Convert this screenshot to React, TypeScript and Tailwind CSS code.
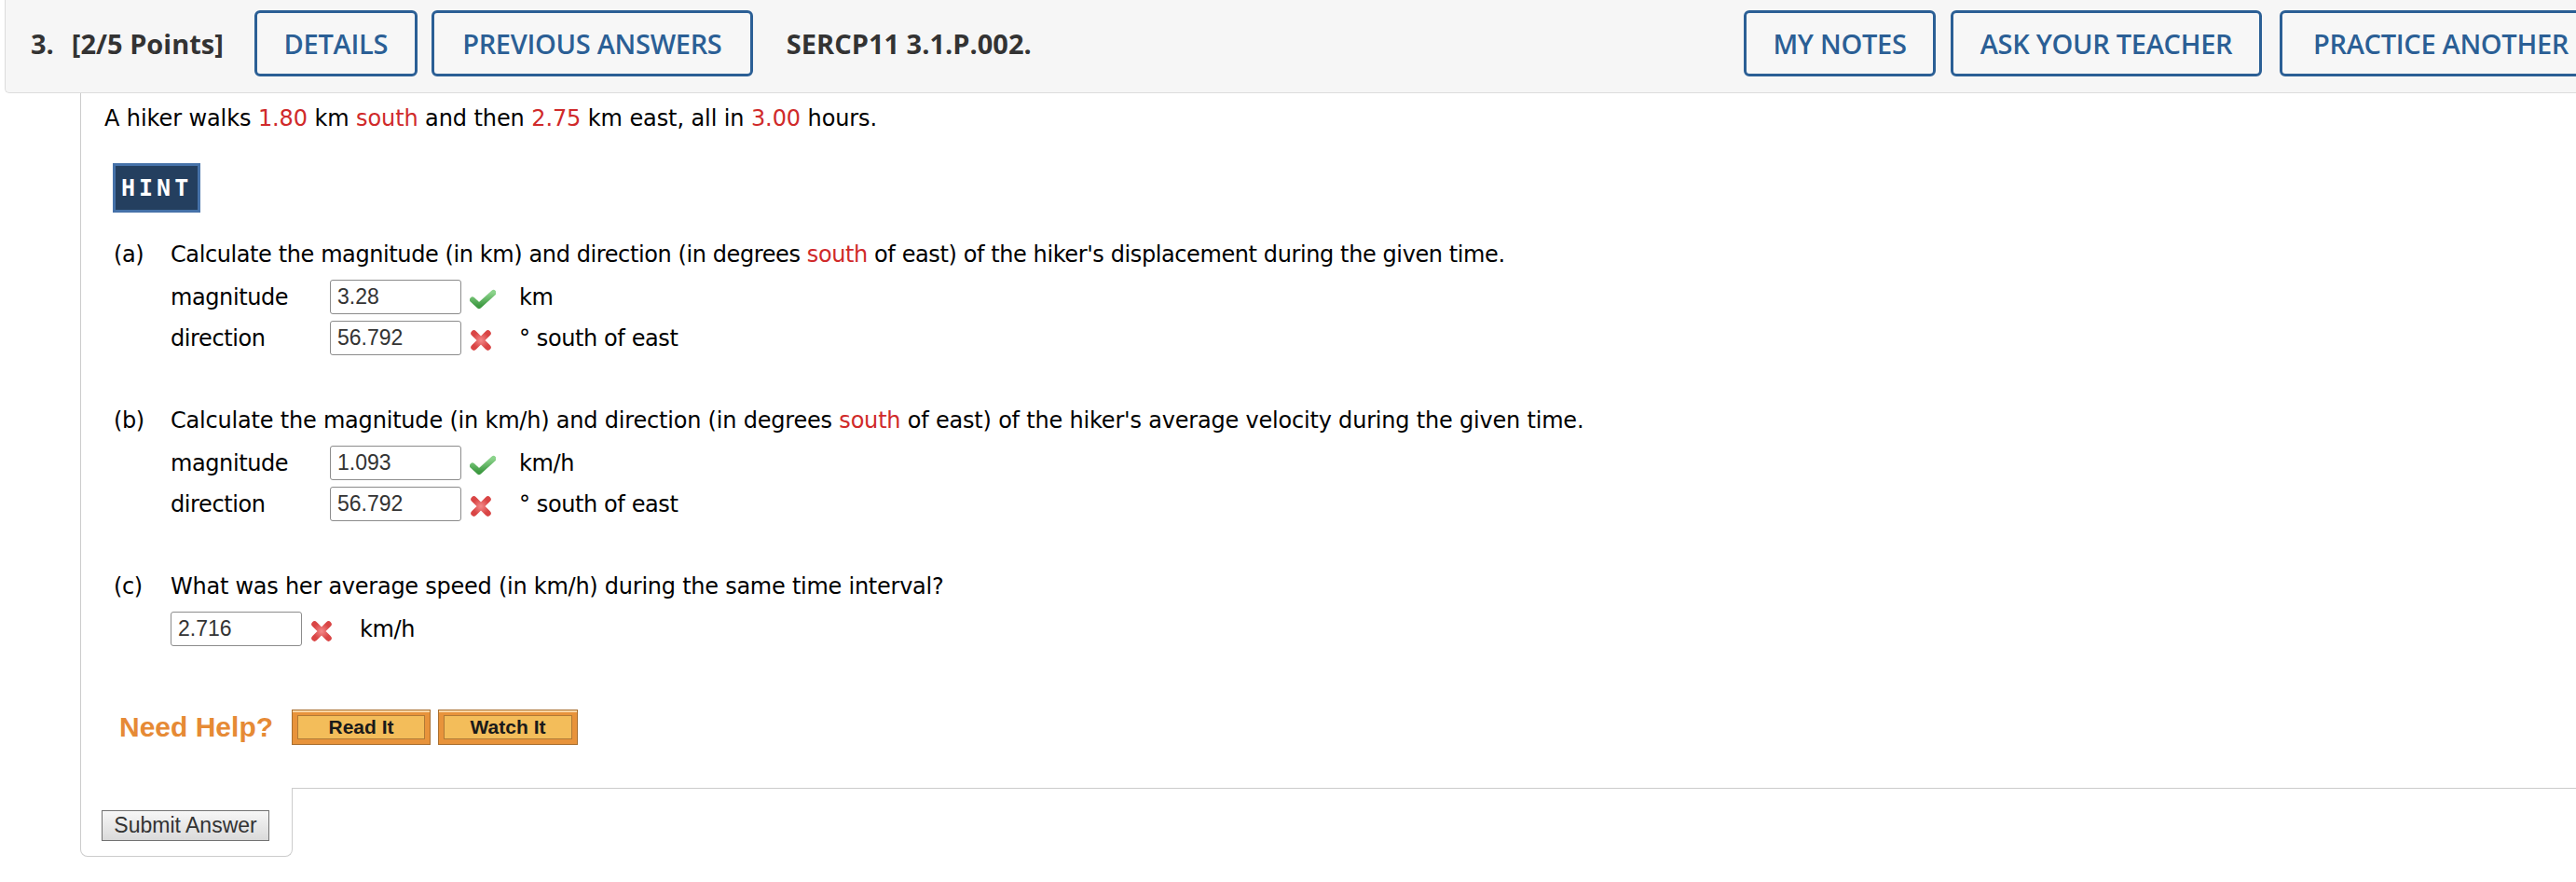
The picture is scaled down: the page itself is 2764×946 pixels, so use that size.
import React from 'react';

const BLUE = 'border-[#2b5f95] text-[#2b5f95]';

function HeaderButton({ label, className }: { label: string; className: string }) {
  return (
    <div
      className={`flex h-[71px] shrink-0 items-center justify-center rounded-[6px] border-[3px] bg-[#f7f7f7] text-[29px] font-semibold tracking-[-0.3px] ${BLUE} ${className}`}
    >
      {label}
    </div>
  );
}

function CheckIcon() {
  return (
    <svg width="28" height="22" viewBox="0 0 28 22">
      <defs>
        <linearGradient id="chk" x1="0" y1="0" x2="0" y2="1">
          <stop offset="0" stopColor="#8bd38b" />
          <stop offset="1" stopColor="#3e9a42" />
        </linearGradient>
      </defs>
      <path d="M3 11.5 L10 18 L25.5 4" fill="none" stroke="url(#chk)" strokeWidth="6" strokeLinecap="round" strokeLinejoin="round" />
    </svg>
  );
}

function CrossIcon() {
  return (
    <svg width="24" height="24" viewBox="0 0 24 24">
      <defs>
        <radialGradient id="crs" cx="0.5" cy="0.5" r="0.6">
          <stop offset="0" stopColor="#f48a8a" />
          <stop offset="1" stopColor="#d94545" />
        </radialGradient>
      </defs>
      <path d="M4.5 4.5 L19.5 19.5 M19.5 4.5 L4.5 19.5" fill="none" stroke="url(#crs)" strokeWidth="6.5" strokeLinecap="round" />
    </svg>
  );
}

function AnswerBox({ value }: { value: string }) {
  return (
    <input
      type="text"
      readOnly
      value={value}
      className="h-[37px] w-[141px] shrink-0 rounded-[3px] border border-[#8c8c8c] bg-white pl-[7px] font-['Liberation_Sans',Arial,sans-serif] text-[23px] tracking-normal text-[#333333] outline-none"
    />
  );
}

interface RowProps {
  label?: string;
  value: string;
  correct: boolean;
  unit: string;
  className?: string;
}

function AnswerRow({ label, value, correct, unit, className = '' }: RowProps) {
  return (
    <div className={`flex h-[37px] items-center ${className}`}>
      {label && <span className="w-[171px] shrink-0">{label}</span>}
      <AnswerBox value={value} />
      <span className="ml-[9px] mt-[5px] flex w-[28px] shrink-0">{correct ? <CheckIcon /> : <CrossIcon />}</span>
      <span className="ml-[25px] whitespace-nowrap">{unit}</span>
    </div>
  );
}

function Red({ children }: { children: React.ReactNode }) {
  return <span className="text-[#d02a2a]">{children}</span>;
}

interface QuestionProps {
  part: string;
  children: React.ReactNode;
  className?: string;
  textClass?: string;
}

function Question({ part, children, className = '', textClass = '' }: QuestionProps) {
  return (
    <div className={`ml-[10px] flex ${className}`}>
      <span className="w-[61px] shrink-0">({part})</span>
      <div className={`whitespace-nowrap ${textClass}`}>{children}</div>
    </div>
  );
}

function HelpButton({ label, className = '' }: { label: string; className?: string }) {
  return (
    <div
      className={`h-[38px] border border-[#a96f30] bg-[#e8933b] p-[5px] shadow-[inset_0_2px_0_#f8d6a4] ${className}`}
    >
      <div className="flex h-full items-center justify-center border border-[#b07a36] bg-[#f3bd5a] font-['Liberation_Sans',Arial,sans-serif] text-[21px] font-bold tracking-normal text-[#1a1a1a]">
        {label}
      </div>
    </div>
  );
}

export default function App() {
  return (
    <div className="min-h-[946px] w-full overflow-hidden bg-white font-['DejaVu_Sans',Verdana,sans-serif] text-[24px] leading-[36px] tracking-[-0.4px] text-black">
      {/* question header */}
      <div className="ml-[5px] flex h-[100px] items-center rounded-bl-[5px] border-b border-l border-[#dcdcdc] bg-[#f6f6f6] pb-[6px] pl-[27px] font-['Open_Sans',sans-serif] text-[29px] leading-none tracking-normal text-[#333333]">
        <span className="font-bold">3.</span>
        <span className="ml-[19px] font-bold">[2/5 Points]</span>
        <HeaderButton label="DETAILS" className="ml-[33px] w-[175px]" />
        <HeaderButton label="PREVIOUS ANSWERS" className="ml-[15px] w-[345px]" />
        <span className="ml-[36px] whitespace-nowrap font-bold">SERCP11 3.1.P.002.</span>
        <div className="-mr-[28px] ml-auto flex">
          <HeaderButton label="MY NOTES" className="w-[206px]" />
          <HeaderButton label="ASK YOUR TEACHER" className="ml-[16px] w-[334px]" />
          <HeaderButton label="PRACTICE ANOTHER" className="ml-[19px] w-[346px]" />
        </div>
      </div>

      {/* question body */}
      <div className="ml-[86px]">
        <div className="border-l border-[#cccccc] pb-[46px] pl-[25px] pt-[9px]">
          <p className="whitespace-nowrap tracking-[-0.1px]">
            A hiker walks <Red>1.80</Red> km <Red>south</Red> and then <Red>2.75</Red> km east, all in <Red>3.00</Red> hours.
          </p>

          <div className="ml-[9px] mt-[30px] flex h-[53px] w-[94px] items-center border-[3px] border-[#4672a9] bg-[#243f5f] pl-[6px] font-['DejaVu_Sans_Mono',monospace] text-[25px] font-bold tracking-[4px] text-white">
            HINT
          </div>

          <Question part="a" className="mt-[27px]">
            Calculate the magnitude (in km) and direction (in degrees <Red>south</Red> of east) of the hiker's displacement during the given time.
          </Question>
          <div className="ml-[71px] mt-[9px] flex flex-col gap-[7px]">
            <AnswerRow label="magnitude" value="3.28" correct unit="km" />
            <AnswerRow label="direction" value="56.792" correct={false} unit="° south of east" />
          </div>

          <Question part="b" className="mt-[52px]" textClass="tracking-[-0.2px]">
            Calculate the magnitude (in km/h) and direction (in degrees <Red>south</Red> of east) of the hiker's average velocity during the given time.
          </Question>
          <div className="ml-[71px] mt-[9px] flex flex-col gap-[7px]">
            <AnswerRow label="magnitude" value="1.093" correct unit="km/h" />
            <AnswerRow label="direction" value="56.792" correct={false} unit="° south of east" />
          </div>

          <Question part="c" className="mt-[52px]" textClass="tracking-[-0.25px]">
            What was her average speed (in km/h) during the same time interval?
          </Question>
          <div className="ml-[71px] mt-[9px]">
            <AnswerRow value="2.716" correct={false} unit="km/h" />
          </div>

          <div className="ml-[16px] mt-[68px] flex items-center">
            <span className="font-['Liberation_Sans',Arial,sans-serif] text-[30px] font-bold leading-[30px] tracking-normal text-[#e68a35]">
              Need Help?
            </span>
            <HelpButton label="Read It" className="ml-[20px] w-[149px]" />
            <HelpButton label="Watch It" className="ml-[8px] w-[150px]" />
          </div>
        </div>

        <div className="flex">
          <div className="w-[228px] shrink-0 rounded-b-[8px] border-x border-b border-[#cccccc] pb-[15px] pl-[22px] pt-[22px]">
            <button className="h-[33px] w-[180px] border border-[#727272] bg-gradient-to-b from-[#f7f7f7] to-[#dadada] font-['Liberation_Sans',Arial,sans-serif] text-[23px] leading-none tracking-normal text-[#333333]">
              Submit Answer
            </button>
          </div>
          <div className="flex-1 border-t border-[#cccccc]" />
        </div>
      </div>
    </div>
  );
}
